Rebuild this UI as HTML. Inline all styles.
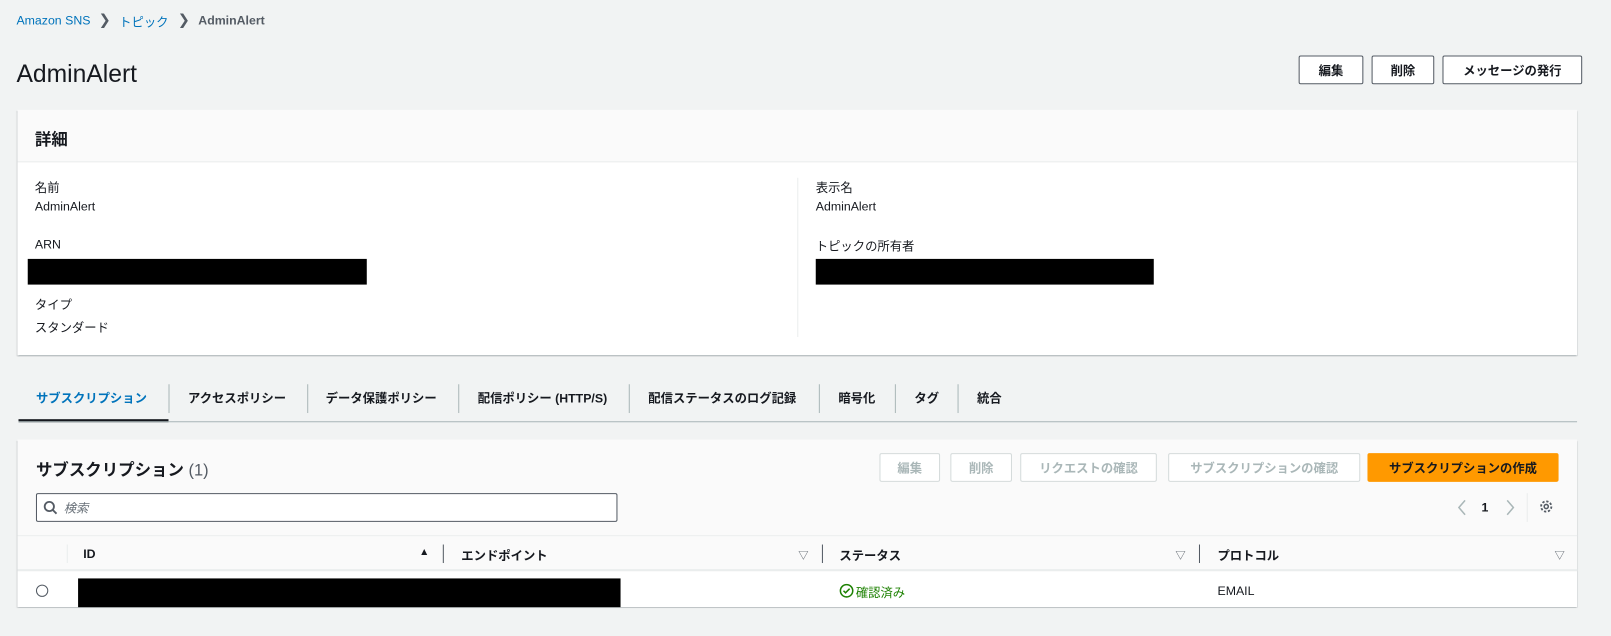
<!DOCTYPE html>
<html><head><meta charset="utf-8"><style>
*{box-sizing:border-box;margin:0;padding:0}
body{width:1611px;height:636px;background:#f1f3f3;font-family:"Liberation Sans","Noto Sans CJK JP",sans-serif;color:#16191f;overflow:hidden;font-size:12px}
#w{position:absolute;left:0;top:0;width:1568px;height:619px;transform:scale(1.0274);transform-origin:0 0}
.a{position:absolute;white-space:nowrap}
.btn{position:absolute;height:28px;border:1px solid #545b64;border-radius:2px;background:#fff;font-weight:bold;font-size:12px;display:flex;align-items:center;justify-content:center;color:#16191f;white-space:nowrap}
.dis{border-color:#d5dbdb;color:#aab7b8}
.panel{position:absolute;left:17px;width:1518px;background:#fff;box-shadow:0 1px 1px rgba(0,28,36,.3),1px 1px 1px rgba(0,28,36,.15),-1px 1px 1px rgba(0,28,36,.15)}
.lbl{color:#16191f;font-size:12px}
.blk{position:absolute;background:#000}
.tab{position:absolute;top:379px;font-weight:bold;font-size:12px;color:#16191f}
.sep{position:absolute;top:374px;width:1px;height:28px;background:#aab7b8}
</style></head><body><div id="w">
<div class="a" style="left:16px;top:13px;font-size:12px;color:#0073bb">Amazon SNS</div>
<div class="a" style="left:96px;top:11px;font-size:14px;color:#545b64">&#x276F;</div>
<div class="a" style="left:116px;top:13px;color:#0073bb">トピック</div>
<div class="a" style="left:173px;top:11px;font-size:14px;color:#545b64">&#x276F;</div>
<div class="a" style="left:193px;top:13px;font-weight:bold;color:#545b64">AdminAlert</div>
<div class="a" style="left:16px;top:59px;font-size:24px">AdminAlert</div>
<div class="btn" style="left:1264px;top:54px;width:63px">編集</div>
<div class="btn" style="left:1335px;top:54px;width:61px">削除</div>
<div class="btn" style="left:1404px;top:54px;width:136px">メッセージの発行</div>

<div class="panel" style="top:107px;height:239px">
 <div style="height:51px;background:#fafafa;border-bottom:1px solid #eaeded"></div>
 <div class="a" style="left:17px;top:15px;font-size:16px;font-weight:bold">詳細</div>
 <div class="a lbl" style="left:17px;top:67px">名前</div>
 <div class="a" style="left:17px;top:87px">AdminAlert</div>
 <div class="a lbl" style="left:17px;top:124px">ARN</div>
 <div class="blk" style="left:10px;top:145px;width:330px;height:25px"></div>
 <div class="a lbl" style="left:17px;top:181px">タイプ</div>
 <div class="a" style="left:17px;top:203px">スタンダード</div>
 <div style="position:absolute;left:759px;top:66px;width:1px;height:155px;background:#eaeded"></div>
 <div class="a lbl" style="left:777px;top:67px">表示名</div>
 <div class="a" style="left:777px;top:87px">AdminAlert</div>
 <div class="a lbl" style="left:777px;top:124px">トピックの所有者</div>
 <div class="blk" style="left:777px;top:145px;width:329px;height:25px"></div>
</div>

<div class="tab" style="left:35px;color:#0073bb">サブスクリプション</div>
<div style="position:absolute;left:18px;top:408px;width:146px;height:3px;background:#16191f"></div>
<div style="position:absolute;left:18px;top:410px;width:1517px;height:1px;background:#aab7b8"></div>
<div class="sep" style="left:164px"></div>
<div class="tab" style="left:183px">アクセスポリシー</div>
<div class="sep" style="left:299px"></div>
<div class="tab" style="left:317px">データ保護ポリシー</div>
<div class="sep" style="left:446px"></div>
<div class="tab" style="left:465px">配信ポリシー (HTTP/S)</div>
<div class="sep" style="left:612px"></div>
<div class="tab" style="left:631px">配信ステータスのログ記録</div>
<div class="sep" style="left:797px"></div>
<div class="tab" style="left:816px">暗号化</div>
<div class="sep" style="left:871px"></div>
<div class="tab" style="left:890px">タグ</div>
<div class="sep" style="left:932px"></div>
<div class="tab" style="left:951px">統合</div>

<div class="panel" style="top:428px;height:163px">
 <div style="position:absolute;left:0;top:0;width:100%;height:94px;background:#fafafa;border-bottom:1px solid #eaeded"></div>
 <div class="a" style="left:18px;top:16px;font-size:16px;font-weight:bold">サブスクリプション <span style="font-weight:normal;color:#545b64">(1)</span></div>
 <div class="btn dis" style="left:839px;top:13px;width:59px">編集</div>
 <div class="btn dis" style="left:908px;top:13px;width:60px">削除</div>
 <div class="btn dis" style="left:976px;top:13px;width:133px">リクエストの確認</div>
 <div class="btn dis" style="left:1120px;top:13px;width:187px">サブスクリプションの確認</div>
 <div class="btn" style="left:1314px;top:13px;width:186px;background:#ff9900;border-color:#ff9900">サブスクリプションの作成</div>
 <div style="position:absolute;left:18px;top:52px;width:566px;height:28px;border:1px solid #545b64;border-radius:2px;background:#fff"></div>
 <svg class="a" style="left:25px;top:59px" width="14" height="14" viewBox="0 0 14 14"><circle cx="6" cy="6" r="4.5" fill="none" stroke="#545b64" stroke-width="1.8"/><path d="M9.3 9.3L13 13" stroke="#545b64" stroke-width="1.8"/></svg>
 <div class="a" style="left:45px;top:58px;font-style:italic;color:#687078">検索</div>
 <svg class="a" style="left:1401px;top:58px" width="10" height="16" viewBox="0 0 10 16"><path d="M8 1L2 8l6 7" fill="none" stroke="#aab7b8" stroke-width="1.5"/></svg>
 <div class="a" style="left:1425px;top:59px;font-weight:bold">1</div>
 <svg class="a" style="left:1448px;top:58px" width="10" height="16" viewBox="0 0 10 16"><path d="M2 1l6 7-6 7" fill="none" stroke="#aab7b8" stroke-width="1.5"/></svg>
 <div style="position:absolute;left:1469px;top:52px;width:1px;height:28px;background:#eaeded"></div>
 <svg class="a" style="left:1481px;top:58px" width="14" height="14" viewBox="0 0 14 14"><circle cx="7" cy="7" r="2" fill="none" stroke="#545b64" stroke-width="1.5"/><circle cx="7" cy="7" r="5" fill="none" stroke="#545b64" stroke-width="1.8" stroke-dasharray="2.2 1.7"/></svg>
 <div style="position:absolute;left:0;top:94px;width:100%;height:34px;background:#fafafa;border-bottom:2px solid #eaeded"></div>
 <div style="position:absolute;left:48px;top:102px;width:1px;height:18px;background:#eaeded"></div>
 <div class="a" style="left:64px;top:104px;font-weight:bold">ID</div>
 <div class="a" style="left:391px;top:104px;font-size:10px">▲</div>
 <div style="position:absolute;left:414px;top:102px;width:1px;height:18px;background:#545b64"></div>
 <div class="a" style="left:432px;top:104px;font-weight:bold">エンドポイント</div>
 <div class="a" style="left:760px;top:104px;font-size:10px;color:#545b64">▽</div>
 <div style="position:absolute;left:783px;top:102px;width:1px;height:18px;background:#545b64"></div>
 <div class="a" style="left:800px;top:104px;font-weight:bold">ステータス</div>
 <div class="a" style="left:1127px;top:104px;font-size:10px;color:#545b64">▽</div>
 <div style="position:absolute;left:1150px;top:102px;width:1px;height:18px;background:#545b64"></div>
 <div class="a" style="left:1168px;top:104px;font-weight:bold">プロトコル</div>
 <div class="a" style="left:1496px;top:104px;font-size:10px;color:#545b64">▽</div>
 <div style="position:absolute;left:18px;top:141px;width:12px;height:12px;border:1px solid #545b64;border-radius:50%"></div>
 <div class="blk" style="left:59px;top:135px;width:528px;height:28px"></div>
 <svg class="a" style="left:800px;top:140px" width="14" height="14" viewBox="0 0 14 14"><circle cx="7" cy="7" r="6" fill="none" stroke="#1d8102" stroke-width="1.5"/><path d="M4 7l2 2 4-4" fill="none" stroke="#1d8102" stroke-width="1.5"/></svg>
 <div class="a" style="left:816px;top:140px;color:#1d8102">確認済み</div>
 <div class="a" style="left:1168px;top:140px">EMAIL</div>
</div>
</div></body></html>
